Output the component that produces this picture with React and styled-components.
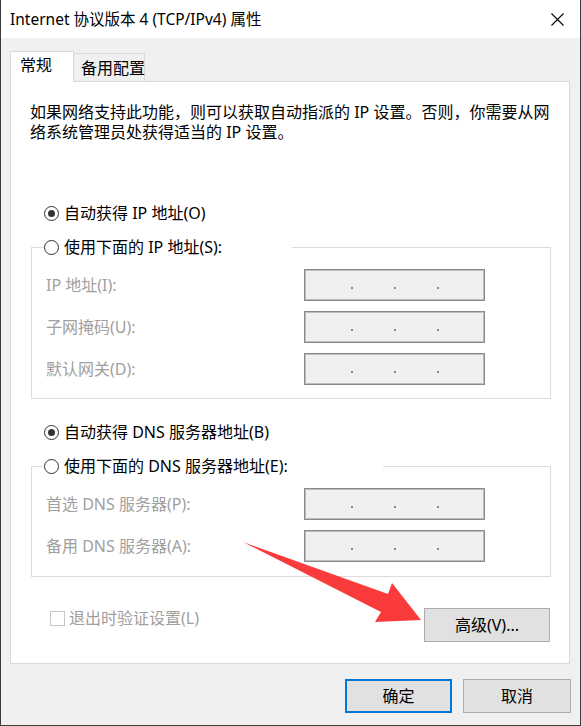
import React from 'react';
import styled, { createGlobalStyle } from 'styled-components';

const Global = createGlobalStyle`
  html, body { margin: 0; padding: 0; background: #ffffff; }
  * { box-sizing: border-box; }
`;

const Window = styled.div`
  position: relative;
  width: 581px;
  height: 726px;
  display: flex;
  flex-direction: column;
  border: 1px solid #3c3c3c;
  border-top: none;
  background: #f0f0f0;
  font-family: "Noto Sans", "Noto Sans CJK SC", sans-serif;
  font-size: 16px;
  color: #000;
  overflow: hidden;
`;

const TitleBar = styled.div`
  height: 38px;
  flex: none;
  background: #ffffff;
  display: flex;
  align-items: center;
  justify-content: space-between;
  padding: 0 16px 0 9px;
`;

const Title = styled.div`
  font-size: 15.5px;
  line-height: 20px;
  color: #000;
  white-space: nowrap;
`;

const Body = styled.div`
  flex: 1;
  display: flex;
  flex-direction: column;
  padding: 13px 10px 0 9px;
`;

const TabStrip = styled.div`
  display: flex;
  align-items: flex-end;
  height: 31px;
  margin-bottom: -1px;
  position: relative;
  z-index: 1;
`;

const Tab = styled.div`
  font-size: 16px;
  line-height: 20px;
  border: 1px solid #d9d9d9;
  border-bottom: none;
  white-space: nowrap;
  ${(p) =>
    p.$active
      ? `
    width: 64px;
    height: 31px;
    background: #ffffff;
    padding: 3px 0 0 9px;
  `
      : `
    width: 72px;
    height: 28px;
    margin-left: -1px;
    margin-bottom: 1px;
    background: #f0f0f0;
    padding: 4px 0 0 7px;
  `}
`;

const Panel = styled.div`
  height: 583px;
  flex: none;
  background: #ffffff;
  border: 1px solid #d9d9d9;
  display: flex;
  flex-direction: column;
  padding: 0 18px 0 20px;
`;

const Description = styled.p`
  margin: 20px 0 0 -1px;
  font-size: 16px;
  line-height: 20px;
  white-space: nowrap;
`;

const RadioRow = styled.label`
  display: flex;
  align-items: center;
  gap: 5px;
  height: 20px;
  line-height: 20px;
  margin-top: ${(p) => p.$top || 0}px;
  margin-left: ${(p) => p.$left || 0}px;
  white-space: nowrap;
  background: #ffffff;
`;

const RadioCircle = styled.span`
  width: 15px;
  height: 15px;
  flex: none;
  border-radius: 50%;
  border: 1px solid #333333;
  background: #ffffff;
  display: flex;
  align-items: center;
  justify-content: center;
  &::after {
    content: '';
    width: 7px;
    height: 7px;
    border-radius: 50%;
    background: ${(p) => (p.$checked ? '#333333' : 'transparent')};
  }
`;

const Group = styled.fieldset`
  margin: ${(p) => p.$top}px 0 0 0;
  border: 1px solid #dcdcdc;
  padding: 12px 0 ${(p) => p.$bottom}px 0;
  min-width: 0;
`;

const Legend = styled.legend`
  padding: 0;
  margin-left: 12px;
  width: ${(p) => p.$width}px;
  background: #ffffff;
`;

const FieldGrid = styled.div`
  display: grid;
  grid-template-columns: 258px 181px;
  grid-auto-rows: 32px;
  row-gap: 10px;
  align-items: center;
  padding-left: 14px;
`;

const FieldLabel = styled.span`
  color: #a0a0a0;
  font-size: 16px;
  line-height: 20px;
  white-space: nowrap;
`;

const AddressBox = styled.div`
  width: 181px;
  height: 32px;
  border: 1px solid #8a8a8a;
  box-shadow: inset 0 0 0 1px #bdbdbd;
  background: #f0f0f0;
  display: flex;
  justify-content: center;
  align-items: flex-start;
  gap: 41px;
  padding-top: 17px;
  padding-left: 1px;
`;

const Dot = styled.span`
  width: 2px;
  height: 2px;
  background: #7f8898;
`;

const BottomRow = styled.div`
  margin-top: 31px;
  display: flex;
  align-items: flex-start;
  justify-content: space-between;
  padding: 0 1px 0 19px;
`;

const CheckLabel = styled.label`
  display: flex;
  align-items: center;
  gap: 4px;
  height: 20px;
  color: #a0a0a0;
  line-height: 20px;
  white-space: nowrap;
`;

const CheckBox = styled.span`
  width: 15px;
  height: 15px;
  border: 1px solid #c6c6c6;
  background: #ffffff;
`;

const Button = styled.button`
  width: ${(p) => p.$width}px;
  height: 34px;
  font-family: inherit;
  font-size: 16px;
  color: #000;
  background: #e1e1e1;
  border: ${(p) => (p.$default ? '2px solid #0078d7' : '1px solid #adadad')};
  padding: 0;
  display: flex;
  align-items: center;
  justify-content: center;
  line-height: 20px;
`;

const Footer = styled.div`
  margin-top: 15px;
  margin-right: -1px;
  display: flex;
  justify-content: flex-end;
  gap: 11px;
`;

const ArrowLayer = styled.svg`
  position: absolute;
  left: -1px;
  top: 0;
  pointer-events: none;
`;

function AddressField() {
  return (
    <AddressBox>
      <Dot />
      <Dot />
      <Dot />
    </AddressBox>
  );
}

function Radio({ checked, top, left, children }) {
  return (
    <RadioRow $top={top} $left={left}>
      <RadioCircle $checked={checked} />
      {children}
    </RadioRow>
  );
}

export default function App() {
  return (
    <>
      <Global />
      <Window>
        <TitleBar>
          <Title>Internet 协议版本 4 (TCP/IPv4) 属性</Title>
          <svg width="13" height="13" viewBox="0 0 13 13">
            <path d="M0.5 0.5 L12.5 12.5 M12.5 0.5 L0.5 12.5" stroke="#000" strokeWidth="1.1" fill="none" />
          </svg>
        </TitleBar>
        <Body>
          <TabStrip>
            <Tab $active>常规</Tab>
            <Tab>备用配置</Tab>
          </TabStrip>
          <Panel>
            <Description>
              如果网络支持此功能，则可以获取自动指派的 IP 设置。否则，你需要从网
              <br />
              络系统管理员处获得适当的 IP 设置。
            </Description>

            <Radio checked top={61} left={13}>自动获得 IP 地址(O)</Radio>
            <Group $top={14} $bottom={13}>
              <Legend $width={248}>
                <Radio>使用下面的 IP 地址(S):</Radio>
              </Legend>
              <FieldGrid>
                <FieldLabel>IP 地址(I):</FieldLabel>
                <AddressField />
                <FieldLabel>子网掩码(U):</FieldLabel>
                <AddressField />
                <FieldLabel>默认网关(D):</FieldLabel>
                <AddressField />
              </FieldGrid>
            </Group>

            <Radio checked top={23} left={13}>自动获得 DNS 服务器地址(B)</Radio>
            <Group $top={14} $bottom={14}>
              <Legend $width={339}>
                <Radio>使用下面的 DNS 服务器地址(E):</Radio>
              </Legend>
              <FieldGrid>
                <FieldLabel>首选 DNS 服务器(P):</FieldLabel>
                <AddressField />
                <FieldLabel>备用 DNS 服务器(A):</FieldLabel>
                <AddressField />
              </FieldGrid>
            </Group>

            <BottomRow>
              <CheckLabel>
                <CheckBox />
                退出时验证设置(L)
              </CheckLabel>
              <Button $width={126}>高级(V)...</Button>
            </BottomRow>
          </Panel>
          <Footer>
            <Button $width={107} $default>确定</Button>
            <Button $width={108}>取消</Button>
          </Footer>
        </Body>
        <ArrowLayer width="581" height="726" viewBox="0 0 581 726">
          <polygon
            points="243,542 388,594 392,583 421,620 375,622 381,612"
            fill="#fa3b3b"
          />
        </ArrowLayer>
      </Window>
    </>
  );
}
